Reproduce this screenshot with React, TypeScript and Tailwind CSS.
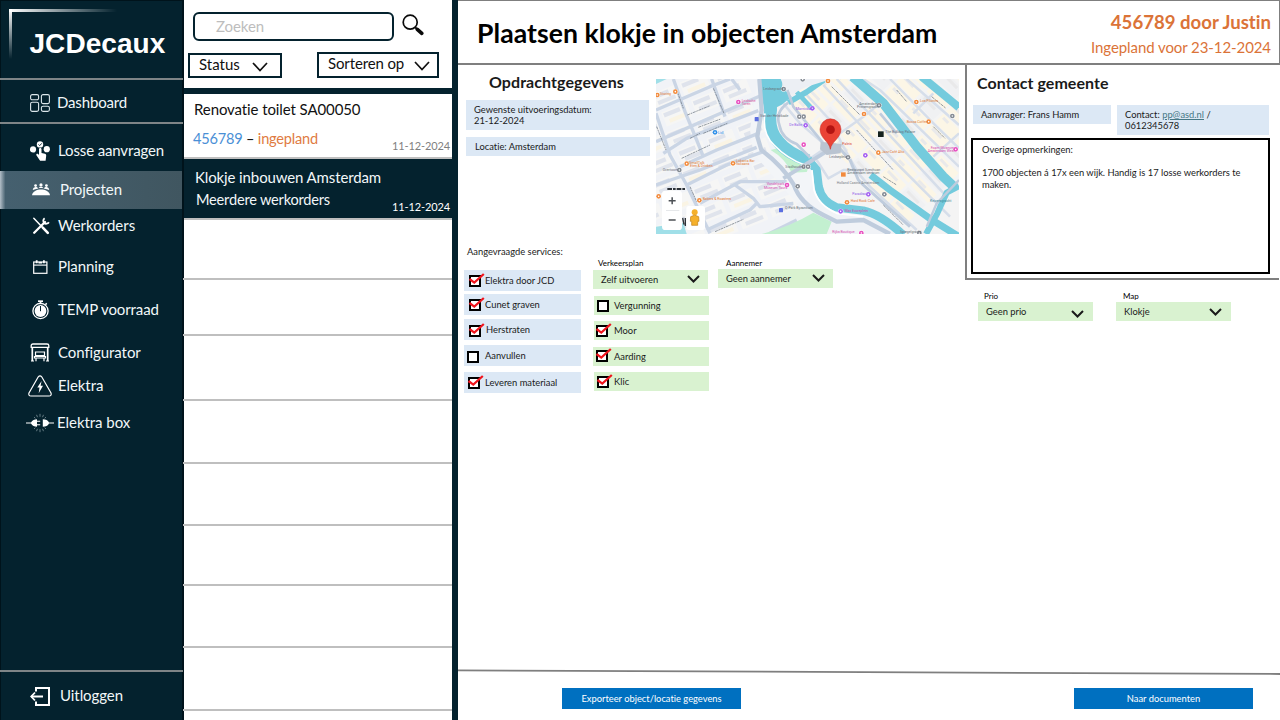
import type { ReactNode } from "react";

/* ---------- sidebar icons ---------- */

const DashboardIcon = () => (
  <svg width="20" height="18" viewBox="0 0 20 18" fill="none" stroke="#dbe6ea" strokeWidth="1.1">
    <rect x="0.6" y="0.6" width="8" height="5.2" rx="1.6" />
    <rect x="11.4" y="0.6" width="8" height="9" rx="1.6" />
    <rect x="0.6" y="8.2" width="8" height="9.2" rx="1.6" />
    <rect x="11.4" y="12.2" width="8" height="5.2" rx="1.6" />
  </svg>
);

const RequestsIcon = () => (
  <svg width="20" height="20" viewBox="0 0 20 20" fill="#fff">
    <circle cx="3" cy="8.4" r="3.1" />
    <circle cx="16.8" cy="8.2" r="3.1" />
    <circle cx="10" cy="3.4" r="3.2" />
    <path d="M8.5 3.4 9.7 4.6 11.8 2.3" stroke="#04222e" strokeWidth="0.9" fill="none" />
    <path d="M9 8.400c0-1.800 2.500-1.800 2.500 0v3.600l3.400.8c1 .3 1.400.9 1.300 1.900l-.6 5h-5.500l-3.700-5.400c-.6-1.200.8-2 1.700-1.200l.9.900z" />
  </svg>
);

const ProjectsIcon = () => (
  <svg width="18" height="13" viewBox="0 0 18 13" fill="#fff">
    <circle cx="3.6" cy="2.6" r="1.4" />
    <circle cx="9" cy="1.9" r="1.6" />
    <circle cx="14.4" cy="2.6" r="1.4" />
    <path d="M0.8 7c0-3.4 4.6-3.8 5.4-1.4C4 6 2.200 6.600 0.800 7zM6.600 5.300c.3-2.200 4.500-2.200 4.800 0-1.600-.3-3.200-.3-4.800 0zM11.800 5.600C12.600 3.200 17.200 3.600 17.200 7c-1.400-.4-3.200-1-5.400-1.400z" />
    <path d="M0 12.200C1.200 4.600 16.800 4.600 18 12.200z" />
  </svg>
);

const ToolsIcon = () => (
  <svg width="18" height="18" viewBox="0 0 18 18" fill="none" stroke="#fff">
    <path d="M2.200 15.800 13 5" strokeWidth="2.300" strokeLinecap="round" />
    <path d="M12.600 1.200c-1.700 1.300-1.700 3.600-.4 4.800 1.200 1.200 3.600 1 4.700-.8" strokeWidth="1.800" />
    <path d="M1.800 1.200 10.600 10.400" strokeWidth="1.500" strokeLinecap="round" />
    <path d="M10.800 10.600 15.800 15.800" strokeWidth="2.600" strokeLinecap="round" />
  </svg>
);

const PlanningIcon = () => (
  <svg width="15" height="14" viewBox="0 0 15 14" fill="none" stroke="#fff">
    <rect x="0.700" y="2" width="13.200" height="11.300" strokeWidth="1.200" />
    <path d="M0.700 5.100h13.200" strokeWidth="1.100" />
    <path d="M3.700.3v3M10.900.3v3" strokeWidth="1.800" />
    <path d="M5.500 2.700h3.600" strokeWidth="1.600" />
  </svg>
);

const StopwatchIcon = () => (
  <svg width="17" height="20" viewBox="0 0 17 20" fill="none" stroke="#fff">
    <circle cx="8.500" cy="11" r="7.600" strokeWidth="1.300" />
    <circle cx="8.500" cy="11" r="5.900" fill="#fff" stroke="none" />
    <path d="M8.500 6v5.200" stroke="#04222e" strokeWidth="1" />
    <path d="M6 1.200h5" strokeWidth="1.700" />
    <path d="M8.500 1.200v3" strokeWidth="1.700" />
    <path d="M13.300 4.600l1.500-1.200" strokeWidth="1.400" />
  </svg>
);

const ShelterIcon = () => (
  <svg width="20" height="19" viewBox="0 0 20 19" fill="none" stroke="#fff">
    <path d="M1.200 4.400V2.600Q1.200 1 3 1h14q1.800 0 1.800 1.600v1.800z" strokeWidth="1.300" />
    <path d="M2.300 4.400V18M17.700 4.400V18" strokeWidth="1.700" />
    <path d="M1 18h3M16 18h3" strokeWidth="1.200" />
    <path d="M5.500 9h9v3.600h-9z" strokeWidth="1.200" />
    <path d="M4.500 13.500h11v1.500h-11zM6 15v3.200M14 15v3.200" strokeWidth="1.200" />
  </svg>
);

const WarningIcon = () => (
  <svg width="24" height="22" viewBox="0 0 24 22" fill="none" stroke="#fff">
    <path d="M10.300 1.800 1 17.900Q.2 21 3 21h18q2.800 0 2-3.100L13.700 1.800Q12-.1 10.300 1.800z" strokeWidth="1.200" />
    <path d="M13.600 6 9.300 12.600h2.200l-.8 5.600 4.300-7.400h-2.400z" fill="#fff" stroke="none" />
  </svg>
);

const PlugIcon = () => (
  <svg width="28" height="20" viewBox="0 0 28 20" fill="#fff">
    <path d="M0 9.500h5q2-3.200 6-3.200v1.500h3.200v1h-3.200v2.400h3.200v1h-3.200v1.500q-4 0-6-3.200H0z" />
    <path d="M28 9.500h-5q-1.600-3.200-6.200-3.200v7.400q4.600 0 6.200-3.200h5z" />
    <path
      d="M14 .8v3M10.500 1.800l1 2.400M17.500 1.800l-1 2.400M8 4l1.400 1.400M20 4l-1.400 1.400M14 19.200v-3M10.500 18.200l1-2.400M17.500 18.200l-1-2.400M8 16l1.400-1.400M20 16l-1.400-1.400"
      stroke="#8da0a8"
      strokeWidth="0.700"
    />
  </svg>
);

const LogoutIcon = () => (
  <svg width="20" height="19" viewBox="0 0 20 19" fill="none" stroke="#fff" strokeWidth="2">
    <path d="M6 4.600V1h13v17H6v-3.600" />
    <path d="M1 9.500h12" />
    <path d="M5 5.500 1.200 9.500 5 13.500" strokeWidth="1.800" />
  </svg>
);

/* ---------- small building blocks ---------- */

const Chevron = ({ w = 16, h = 9, sw = 2 }: { w?: number; h?: number; sw?: number }) => (
  <svg width={w} height={h} viewBox={`0 0 ${w} ${h}`} fill="none" stroke="currentColor" strokeWidth={sw}>
    <path d={`M1 1 L${w / 2} ${h - 1.500} L${w - 1} 1`} />
  </svg>
);

const NavItem = ({ icon, label, row, text }: { icon: ReactNode; label: string; row: string; text: string }) => (
  <div className={`flex items-center pl-[26px] ${row}`}>
    <div className="-mt-px flex w-7 shrink-0 items-center justify-center">{icon}</div>
    <span className={`-mt-0.5 whitespace-nowrap text-[15px] leading-[18px] ${text}`}>{label}</span>
  </div>
);

const Check = ({ on, label, row, box, text }: { on: boolean; label: string; row: string; box: string; text: string }) => (
  <div className={`flex items-center ${row}`}>
    <div className={`relative size-3 shrink-0 border-2 border-black bg-white ${box}`}>
      {on && (
        <svg className="absolute -left-[3px] -top-[4px]" width="18" height="14" viewBox="0 0 18 14" fill="none">
          <path d="M1.500 6 6.300 9.600 15.800 1" stroke="#f0141c" strokeWidth="2.200" />
        </svg>
      )}
    </div>
    <span className={`whitespace-nowrap ${text}`}>{label}</span>
  </div>
);

const Select = ({ title, value, head, chev }: { title: string; value: string; head: string; chev: string }) => (
  <div className="w-[115px]">
    <div className={`h-[11px] text-[8px] leading-[11px] text-black ${head}`}>{title}</div>
    <div className="flex h-[19px] items-center justify-between bg-[#d9f2d0] pl-2">
      <span>{value}</span>
      <span className={chev}>
        <Chevron w={13} h={8} sw={2} />
      </span>
    </div>
  </div>
);

/* ---------- map ---------- */

const leftBlocks = [0, 1, 2, 3, 4, 5, 6, 7].flatMap((r) =>
  [0, 1, 2, 3, 4].map((c) => ({ x: -110 + c * 96 + (r % 2) * 12, y: 20 + r * 62, w: 82, k: (r + c) % 3 })),
);

const rightBlocks = [0, 1, 2, 3, 4, 5, 6, 7, 8, 9, 10, 11].flatMap((r) =>
  [0, 1, 2, 3, 4, 5, 6, 7].map((c) => ({ x: c * 84, y: r * 46, k: (r * 2 + c) % 4 })),
);

const streetsLeft = [
  "M18 120 L180 50 L240 27",
  "M18 215 L330 78",
  "M40 250 L110 205 L325 122",
  "M90 290 L200 240 L325 190",
  "M18 345 L150 300 L320 232",
  "M110 345 L230 285 L340 245",
  "M150 400 L270 335 L410 335",
  "M170 480 L300 420 L320 400",
  "M70 27 L105 125 L140 210 L160 260",
  "M185 27 L225 140",
  "M18 130 L60 255 L110 345 L180 490",
  "M245 27 L270 60",
  "M255 345 L310 385 L330 410 L430 400",
  "M440 450 L360 490",
];

const streetsRight = [
  "M470 75 L540 150 L580 230 L625 310 L660 350 L800 480",
  "M520 45 L700 240 L830 370 L900 440",
  "M560 27 L770 250 L890 380",
  "M640 27 L690 60 L927 290",
  "M720 27 L860 170 L927 235",
  "M770 27 L927 165",
  "M400 100 L450 160 L520 220",
  "M690 100 L640 140 L570 190",
  "M850 70 L790 130",
  "M927 190 L850 260",
  "M500 270 L535 325 L580 300 L640 300",
  "M430 300 L540 225",
];

const pois: [number, number, string][] = [
  [22, 75, "#f28a3c"], [76, 65, "#f28a3c"], [110, 281, "#f28a3c"], [249, 280, "#f28a3c"], [148, 391, "#f28a3c"],
  [26, 379, "#f28a3c"], [534, 33, "#f28a3c"], [799, 96, "#f28a3c"], [642, 132, "#f28a3c"], [836, 155, "#f28a3c"],
  [685, 248, "#f28a3c"], [591, 397, "#f28a3c"], [265, 96, "#e84fc0"], [461, 224, "#e84fc0"], [411, 345, "#e84fc0"],
  [917, 238, "#e84fc0"], [634, 489, "#e84fc0"], [487, 115, "#a45ff0"], [467, 166, "#a45ff0"], [646, 256, "#a45ff0"],
  [655, 373, "#a45ff0"], [572, 424, "#a45ff0"], [195, 187, "#2d8fe8"], [401, 57, "#858b93"], [448, 140, "#858b93"],
  [461, 140, "#858b93"], [687, 106, "#858b93"], [594, 187, "#858b93"], [594, 262, "#858b93"], [461, 290, "#858b93"],
  [474, 290, "#858b93"], [443, 349, "#858b93"], [703, 373, "#858b93"], [907, 138, "#858b93"], [88, 300, "#858b93"],
  [808, 489, "#858b93"], [458, 28, "#858b93"],
];

const labels: [number, number, string, string][] = [
  [275, 92, "Leidsche", "#e0559f"], [275, 102, "Toren", "#e0559f"], [340, 57, "Leidsegracht", "#6a7078"],
  [330, 139, "Van der Helstkade", "#6a7078"], [438, 116, "Marnixbad", "#8f5be8"], [418, 166, "De Balie", "#8f5be8"],
  [706, 185, "The Bulldog Palace", "#6a7078"], [810, 94, "Los Pilones", "#e27b35"], [770, 156, "Bocca Coffee", "#e27b35"],
  [842, 234, "Foam Museum", "#d64bb0"], [833, 244, "Amsterdam West", "#d64bb0"], [628, 101, "Amsterdam", "#6a7078"],
  [621, 112, "Prinsengracht", "#6a7078"], [695, 246, "Jazz Café Alto", "#e27b35"], [538, 262, "Leidseplein", "#6a7078"],
  [592, 300, "Restaurant Szechuan", "#6a7078"], [592, 310, "Amsterdam centrum", "#6a7078"],
  [560, 339, "Holland Casino Amsterdam", "#7a8088"], [602, 394, "Hard Rock Cafe", "#e27b35"],
  [607, 373, "Paradiso", "#8f5be8"], [405, 413, "Q-Park Byzantium", "#6a7078"], [350, 343, "Vondelpark", "#d64bb0"],
  [342, 353, "Museum Tours", "#d64bb0"], [118, 278, "SmallTalk", "#e27b35"], [120, 288, "Eten & Drinken", "#e27b35"],
  [258, 273, "Lokanta Bar", "#e27b35"], [258, 283, "Italiaans", "#e27b35"], [158, 388, "Bakers & Roasters", "#e27b35"],
  [30, 72, "Staring", "#e27b35"], [204, 188, "Lidl", "#2d8fe8"], [38, 300, "Overtoom", "#6a7078"],
  [406, 290, "Stadhouders", "#6a7078"], [547, 486, "Rijks Boutique", "#d64bb0"], [750, 485, "Spiegelgracht", "#6a7078"],
  [840, 394, "Keizersgracht", "#3b8a99"], [584, 424, "Max Euweplein", "#d64bb0"], [577, 222, "Paleis", "#d8453c"],
];

const MapView = () => (
  <svg width="303" height="155" viewBox="18 27 909 465" preserveAspectRatio="none" className="block">
    <rect x="18" y="27" width="909" height="465" fill="#f1f3f7" />
    <g transform="rotate(-22 180 260)">
      {leftBlocks.map((b, i) => (
        <g key={i}>
          <rect x={b.x} y={b.y} width={b.w} height={46} fill="#f6f6f5" />
          <rect x={b.x + 4} y={b.y + 5} width={b.w - 30} height={13} fill="#dfe3ec" />
          <rect x={b.x + 14} y={b.y + 27} width={b.w - 26} height={12} fill={b.k ? "#e0e4ec" : "#faf4e4"} />
        </g>
      ))}
    </g>
    <path d="M395 27 L927 27 V492 H760 L640 435 L540 410 L500 300 L380 190 L380 120z" fill="#f4f4f4" />
    <g transform="translate(560 -260) rotate(46)">
      {rightBlocks.map((b, i) => (
        <g key={i}>
          <rect x={b.x} y={b.y - 190} width={76} height={37} fill={b.k === 3 ? "#f0f1f3" : "#fcf6e6"} />
          <rect x={b.x + 8} y={b.y - 184} width={b.k * 9 + 22} height={9} fill="#e9e9ea" />
        </g>
      ))}
    </g>
    <path d="M330 240 L318 190 L340 27 H322 L300 180 L310 250 L440 400 L470 390 L500 300 L460 270z" fill="#f3f5f8" />

    <g fill="none" stroke="#cad5e5" strokeWidth="10" strokeLinejoin="round">
      {streetsLeft.map((d) => (
        <path key={d} d={d} />
      ))}
    </g>
    <g fill="none" stroke="#d6deea" strokeWidth="7.500" strokeLinejoin="round">
      {streetsRight.map((d) => (
        <path key={d} d={d} />
      ))}
    </g>

    <path d="M362 240 Q420 222 448 260 L482 278 L470 306 L425 308 Q405 265 362 240z" fill="#c3f0d0" />
    <path d="M335 492 Q420 470 490 428 L545 455 L530 492z" fill="#c3f0d0" />
    <path d="M18 470 L100 458 L110 492 H18z" fill="#a0dfe8" />
    <path d="M18 27 H50 L18 42z" fill="#a0dfe8" />

    <g fill="none" stroke="#74cbdd" strokeLinejoin="round">
      <path d="M352 27 Q362 70 362 120 Q352 180 385 215 Q410 248 474 272" strokeWidth="38" />
      <path d="M474 268 L500 300 L506 350 Q515 395 560 412 L640 422 Q690 432 760 495" strokeWidth="25" />
      <path d="M415 98 L470 66 L530 24" strokeWidth="17" />
      <path d="M440 66 L486 116" strokeWidth="14" />
      <path d="M608 20 L700 100 L800 230 L880 320 L912 350" strokeWidth="29" />
      <path d="M815 20 L927 112" strokeWidth="24" />
      <path d="M662 315 L720 360 L840 446 L927 500" strokeWidth="21" />
      <path d="M927 348 L890 368 L862 430 L828 492" strokeWidth="18" />
    </g>
    <path d="M325 27 H398 L396 52 L425 80 L395 104 L345 130z" fill="#74cbdd" />
    <path d="M392 27 H545 L470 50 L425 72 L402 50z" fill="#eceff4" />

    <g fill="none" stroke="#bfccdd" strokeLinejoin="round">
      <path d="M328 27 L335 120 L322 200 L334 240 Q400 290 432 345 Q450 400 520 435 L560 455 L640 450 L720 492" strokeWidth="13" />
      <path d="M415 98 Q375 125 388 165 Q395 205 440 222 L480 262" strokeWidth="8" />
      <path d="M400 325 L560 225" strokeWidth="12" />
      <path d="M412 60 L430 110 L520 220" strokeWidth="8" />
      <path d="M560 225 L600 270 L625 330 L640 345 L780 470" strokeWidth="9" />
      <path d="M740 190 L690 130" strokeWidth="8" />
      <path d="M927 330 L860 400 L830 470" strokeWidth="7" />
    </g>
    <g fill="none" stroke="#fff" strokeWidth="5">
      <path d="M345 130 Q335 190 372 225 Q410 265 466 286" />
      <path d="M486 300 L492 360 Q505 405 560 430 L640 440" />
    </g>
    <path d="M512 215 L575 222 L572 250 L530 255 L510 238z" fill="#bac4d1" />

    <g fill="none" stroke="#7a838d" strokeWidth="3" strokeDasharray="9 2 5 2" opacity="0.800">
      <path d="M112 135 L180 107" />
      <path d="M145 172 L212 147" />
      <path d="M120 205 L150 190" />
      <path d="M160 190 L232 160" />
      <path d="M20 170 L48 240" />
      <path d="M190 55 L222 130" />
      <path d="M80 60 L100 115" />
      <path d="M95 265 L180 225" />
      <path d="M195 485 L280 448" />
      <path d="M120 350 L140 395" />
      <path d="M545 50 L630 135" />
      <path d="M620 180 L730 300" />
      <path d="M740 60 L770 95" />
      <path d="M850 170 L885 205" />
      <path d="M700 405 L760 465" />
      <path d="M700 320 L740 345" />
      <path d="M845 80 L888 115" />
    </g>

    {pois.map(([x, y, c]) => (
      <g key={`${x}-${y}`}>
        <circle cx={x} cy={y} r="8" fill="#fff" />
        <circle cx={x} cy={y} r="7" fill={c} />
        <circle cx={x} cy={y} r="2.400" fill="#fff" />
      </g>
    ))}
    <rect x="314" y="141" width="12" height="13" rx="2" fill="#5b6fe0" />
    <rect x="387" y="414" width="12" height="13" rx="2" fill="#5b6fe0" />
    <rect x="573" y="307" width="14" height="13" fill="#f28a3c" />
    <rect x="684" y="184" width="17" height="17" fill="#14211d" />
    <g fontFamily="Roboto, sans-serif" fontSize="10.500">
      {labels.map(([x, y, t, c]) => (
        <text key={t + x} x={x} y={y + 3} fill={c}>
          {t}
        </text>
      ))}
    </g>

    <path d="M541 238 C538 214 510 205 510 178 A31.500 31.500 0 0 1 573 178 C573 205 544 214 541 238z" fill="#ea4335" stroke="#c5221f" strokeWidth="1.500" />
    <circle cx="541.500" cy="179" r="13" fill="#b31412" />

    <path d="M52 357h56" stroke="#2d3238" strokeWidth="6" strokeDasharray="14 3 8 3" />
    <path d="M98 444l4 20M106 444v24" stroke="#2d3238" strokeWidth="4" />
    <rect x="36" y="362" width="60" height="118" rx="10" fill="#fff" />
    <path d="M48 421.500h40" stroke="#dadce0" strokeWidth="2" />
    <path d="M56 392.500h21M66.500 382v21M56 450h21" stroke="#4d5156" strokeWidth="4.500" />
    <rect x="109" y="408" width="56" height="72" rx="8" fill="#fff" />
    <circle cx="134" cy="427" r="9" fill="#f5b02a" />
    <path d="M122 440q12-9 24 0l1 14h-4v12h-18v-12h-4z" fill="#f5b02a" stroke="#bf7d10" strokeWidth="2" />
  </svg>
);

/* ---------- columns ---------- */

const Sidebar = () => (
  <aside className="flex h-full w-[184px] shrink-0 flex-col border-r-2 border-l border-t border-[#00131b] bg-[#04222e] text-[#f2f7f9]">
    <div className="-ml-px flex h-[77px]">
      <div className="relative mt-2 ml-[9px] h-[50px] w-[110px]">
        <div className="absolute left-0 top-0 h-[50px] w-[2.500px] bg-linear-to-b from-white to-transparent" />
        <div className="absolute left-0 top-0 h-[2.500px] w-[108px] bg-linear-to-r from-white to-transparent" />
        <div className="absolute left-[20.500px] top-[19px] font-['Liberation_Sans',sans-serif] text-[28px] leading-8 font-bold tracking-[0.050px] text-white">
          JCDecaux
        </div>
      </div>
    </div>
    <div className="-mx-px h-0.5 shrink-0 bg-[#7f8587]" />
    <NavItem icon={<DashboardIcon />} label="Dashboard" row="h-[42px] -ml-px pt-1" text="ml-[3px] tracking-[-0.160px]" />
    <div className="-mx-px h-0.5 shrink-0 bg-[#7f8587]" />
    <nav className="-ml-px flex flex-1 flex-col pt-[7px]">
      <NavItem icon={<RequestsIcon />} label="Losse aanvragen" row="h-10" text="ml-1 tracking-[-0.130px]" />
      <NavItem
        icon={<div className="ml-0.5"><ProjectsIcon /></div>}
        label="Projecten"
        row="h-[38px] bg-linear-to-r from-[#b4c0c9] via-[#45606f] via-[3%] to-[#405660]"
        text="ml-1.5 tracking-[-0.100px]"
      />
      <NavItem icon={<div className="ml-0.5"><ToolsIcon /></div>} label="Werkorders" row="h-[34px]" text="ml-1" />
      <NavItem icon={<PlanningIcon />} label="Planning" row="h-12" text="ml-1 tracking-[-0.080px]" />
      <NavItem icon={<StopwatchIcon />} label="TEMP voorraad" row="h-[38px]" text="ml-1 tracking-[-0.100px]" />
      <NavItem icon={<ShelterIcon />} label="Configurator" row="h-12" text="ml-1 tracking-[-0.080px]" />
      <NavItem icon={<WarningIcon />} label="Elektra" row="h-[18px]" text="ml-1 tracking-[-0.080px]" />
      <NavItem icon={<PlugIcon />} label="Elektra box" row="h-14" text="ml-[3px] tracking-[-0.050px]" />
    </nav>
    <div className="-mx-px h-0.5 shrink-0 bg-[#7f8587]" />
    <NavItem icon={<div className="pt-0.5"><LogoutIcon /></div>} label="Uitloggen" row="h-12 -ml-px" text="ml-1.5 tracking-[-0.070px]" />
  </aside>
);

const emptyRows = ["h-[60px]", "h-14", "h-[65px]", "h-[63px]", "h-[62px]", "h-[60px]", "h-[62px]", "h-[63px]"];

const WorkList = () => (
  <section className="flex h-full w-[268px] shrink-0 flex-col bg-white text-[15px] leading-[18px] text-[#111]">
    <div className="h-[88px] shrink-0">
      <div className="flex pt-3 pl-[9px]">
        <div className="flex h-[29px] w-[201px] items-center rounded-md border-2 border-[#04222e] pb-0.5 pl-[21px] tracking-[-0.080px] text-[#bdbdbd]">
          Zoeken
        </div>
        <svg className="mt-0.5 ml-2" width="22" height="22" viewBox="0 0 22 22" fill="none" stroke="#0a0a0a">
          <circle cx="8.200" cy="8.200" r="7" strokeWidth="1.700" />
          <path d="M13.300 13.300 15 15" strokeWidth="1.800" />
          <path d="M15.300 15.300 19.800 19.400" strokeWidth="3.600" strokeLinecap="round" />
        </svg>
      </div>
      <div className="mt-[11px] flex items-start">
        <div className="mt-px ml-1 flex h-[25px] w-[94px] items-center justify-between border-2 border-[#04222e] pr-3 pb-[4px] pl-[9px]">
          Status
          <span className="mt-1.5"><Chevron w={16} h={10} sw={1.7} /></span>
        </div>
        <div className="ml-[35px] flex h-[26px] w-[122px] items-center justify-between border-2 border-[#04222e] pr-[7px] pb-[5px] pl-[9px] tracking-[-0.130px]">
          Sorteren op
          <span className="mt-1.5"><Chevron w={16} h={10} sw={1.7} /></span>
        </div>
      </div>
    </div>
    <div className="h-1.5 shrink-0 bg-[#04222e]" />
    <div className="flex h-[65px] shrink-0 flex-col border-b-2 border-[#bfbfbf] pl-2.5">
      <div className="mt-1.5 tracking-[-0.100px]">Renovatie toilet SA00050</div>
      <div className="flex items-start justify-between pr-0.5">
        <div className="-ml-px mt-3 text-[14.600px] tracking-[-0.210px]">
          <span className="text-[#4a8fd6]">456789</span> – <span className="text-[#e07b42]">ingepland</span>
        </div>
        <div className="mt-[19px] text-[11px] tracking-[-0.120px] text-[#7f7f7f]">11-12-2024</div>
      </div>
    </div>
    <div className="h-[61px] shrink-0 border-b-2 border-[#bfbfbf] bg-[#04222e] pl-[11px] text-[#f2f7f9]">
      <div className="pt-[9px] tracking-[-0.120px]">Klokje inbouwen Amsterdam</div>
      <div className="flex items-start justify-between pr-0.5">
        <div className="mt-[5px] ml-px text-[14.600px] tracking-[-0.210px]">Meerdere werkorders</div>
        <div className="mt-3 text-[11px] tracking-[-0.120px] text-white">11-12-2024</div>
      </div>
    </div>
    {emptyRows.map((h, i) => (
      <div key={i} className={`-ml-px shrink-0 border-b-2 border-[#bfbfbf] ${h}`} />
    ))}
  </section>
);

const Header = () => (
  <header className="flex h-[65px] shrink-0 items-start justify-between border-t border-r border-b-2 border-[#7f7f7f] pr-2 pl-[19px]">
    <h1 className="mt-4 text-[26.600px] leading-8 font-bold tracking-[0.050px] whitespace-nowrap">
      Plaatsen klokje in objecten Amsterdam
    </h1>
    <div className="mt-2.5 text-right text-[#db7338]">
      <div className="text-[18.600px] leading-[22px] font-bold">456789 door Justin</div>
      <div className="mt-[5px] text-[15px] leading-[18px] tracking-[-0.080px]">Ingepland voor 23-12-2024</div>
    </div>
  </header>
);

const OrderPanel = () => (
  <div className="w-[507px] shrink-0">
    <div className="flex pl-2">
      <div className="w-[190px]">
        <h2 className="mt-[7px] pl-[23px] text-[16px] leading-5 font-bold tracking-[0.070px]">Opdrachtgegevens</h2>
        <div className="mt-2 flex h-[30px] w-[183px] flex-col justify-center bg-[#dce8f5] pl-2 leading-[11px]">
          <span>Gewenste uitvoeringsdatum:</span>
          <span>21-12-2024</span>
        </div>
        <div className="mt-[7px] flex h-[19px] w-[184px] items-center bg-[#dce8f5] pl-[9px]">Locatie: Amsterdam</div>
      </div>
      <div className="mt-3.5 h-[155px] w-[303px] overflow-hidden">
        <MapView />
      </div>
    </div>
    <div className="mt-[11px] flex items-start">
      <div className="ml-1.5 w-[117px]">
        <div className="h-[25px] pl-[3px] leading-[13px]">Aangevraagde services:</div>
        <Check on label="Elektra door JCD" row="h-[21px] bg-[#dce8f5]" box="ml-[5px]" text="ml-1" />
        <Check on label="Cunet graven" row="mt-[3px] h-[21px] bg-[#dce8f5]" box="ml-[5px] mt-px" text="ml-1" />
        <Check on label="Herstraten" row="mt-1 h-[21px] bg-[#dce8f5]" box="ml-[5px] mt-[3px]" text="ml-[5px]" />
        <Check on={false} label="Aanvullen" row="mt-[5px] h-[21px] bg-[#dce8f5]" box="ml-[3px] mt-[3px]" text="ml-1.5" />
        <Check on label="Leveren materiaal" row="mt-1.5 h-[21px] bg-[#dce8f5]" box="ml-1" text="ml-[5px]" />
      </div>
      <div className="mt-[13px] ml-3 w-[116px]">
        <Select title="Verkeersplan" value="Zelf uitvoeren" head="pl-[5px] mb-px" chev="pr-2 -mt-px" />
        <Check on={false} label="Vergunning" row="mt-[7px] ml-px h-[19px] bg-[#d9f2d0]" box="ml-[3px]" text="ml-[5px]" />
        <Check on label="Moor" row="mt-1.5 ml-px h-[19px] bg-[#d9f2d0]" box="ml-0.5" text="ml-1.5" />
        <Check on label="Aarding" row="mt-[7px] h-[19px] bg-[#d9f2d0]" box="ml-[3px] -mt-0.5" text="ml-1.5 -mt-px" />
        <Check on label="Klic" row="mt-1.5 ml-px h-[19px] bg-[#d9f2d0]" box="ml-[3px]" text="ml-[5px]" />
      </div>
      <div className="mt-[13px] ml-[9px]">
        <Select title="Aannemer" value="Geen aannemer" head="pl-2" chev="pr-2 -mt-px" />
      </div>
    </div>
  </div>
);

const ContactPanel = () => (
  <div className="flex-1">
    <div className="mr-px h-[215px] border-b-2 border-l-2 border-[#7f7f7f] pr-[9px] pl-1">
      <h2 className="pt-2 pl-1.5 text-[16px] leading-5 font-bold tracking-[0.040px]">Contact gemeente</h2>
      <div className="mt-3 ml-0.5 flex items-start justify-between pr-px">
        <div className="flex h-[19px] w-[138px] items-center bg-[#dce8f5] pl-2">Aanvrager: Frans Hamm</div>
        <div className="flex h-[30px] w-[152px] flex-col justify-center bg-[#dce8f5] pl-2 leading-[11px]">
          <span>
            Contact: <a className="text-[#467886] underline">pp@asd.nl</a> /
          </span>
          <span>0612345678</span>
        </div>
      </div>
      <div className="mt-[3px] h-[136px] border-2 border-black pt-1 pl-[9px] leading-[11.300px]">
        <p>Overige opmerkingen:</p>
        <p className="mt-3">
          1700 objecten á 17x een wijk. Handig is 17 losse werkorders te
          <br />
          maken.
        </p>
      </div>
    </div>
    <div className="mt-[11px] ml-[13px] flex gap-[23px]">
      <Select title="Prio" value="Geen prio" head="pl-1.5" chev="pr-[9px] pt-1" />
      <Select title="Map" value="Klokje" head="pl-[7px]" chev="pr-[9px]" />
    </div>
  </div>
);

export default function App() {
  return (
    <div className="flex h-[720px] w-[1280px] overflow-hidden bg-white font-[Lato,Carlito,sans-serif] text-black [font-variant-ligatures:none]">
      <Sidebar />
      <WorkList />
      <div className="w-1.5 shrink-0 bg-[#04222e]" />
      <main className="flex h-full flex-1 flex-col">
        <Header />
        <div className="flex flex-1 text-[9.350px] leading-[11px] text-[#1a1a1a]">
          <OrderPanel />
          <ContactPanel />
        </div>
        <svg className="block shrink-0" width="822" height="6" viewBox="0 0 822 6">
          <path d="M0 1.300 L822 5" stroke="#7f7f7f" strokeWidth="1.800" />
        </svg>
        <footer className="flex h-[45px] shrink-0 items-start justify-between pt-[13px] pr-[27px] pl-[104px] text-[9.350px] text-white">
          <button className="h-[21px] w-[179px] bg-[#0070c0] leading-[21px]">Exporteer object/locatie gegevens</button>
          <button className="h-[21px] w-[179px] bg-[#0070c0] leading-[19px]">Naar documenten</button>
        </footer>
      </main>
    </div>
  );
}
